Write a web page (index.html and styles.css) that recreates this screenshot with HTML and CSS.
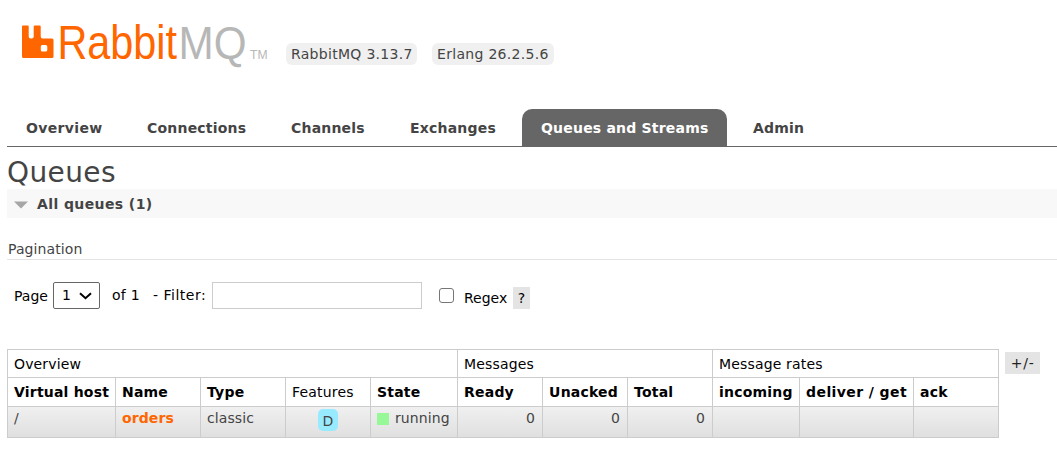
FILE: index.html
```html
<!DOCTYPE html>
<html lang="en">
<head>
<meta charset="utf-8">
<title>RabbitMQ Management</title>
<link rel="stylesheet" href="styles.css">
</head>
<body>
<header class="header">
  <svg class="logo" width="250" height="64" viewBox="0 -10 250 64" role="img" aria-label="RabbitMQ">
    <path class="brand" fill-rule="evenodd" d="M2 6.500q0-1 1-1h4.700q1 0 1 1V16.500q0 2 2 2h1q2 0 2-2V6.500q0-1 1-1h5q1 0 1 1V16.500q0 2 2 2h9.300q1.500 0 1.500 1.500V36.500q0 1.500-1.500 1.500h-28.500q-1.500 0-1.500-1.500zM22.300 25q-1.500 0-1.500 1.500v3.500q0 1.500 1.500 1.500h3.500q1.500 0 1.500-1.500v-3.500q0-1.500-1.500-1.500z"/>
    <text class="word brand" x="37.500" y="39" textLength="119.500" lengthAdjust="spacingAndGlyphs">Rabbit</text>
    <text class="word grey" x="158.500" y="38.500" textLength="68" lengthAdjust="spacingAndGlyphs">MQ</text>
    <text class="tm grey" x="230" y="39" textLength="17.500" lengthAdjust="spacingAndGlyphs">TM</text>
  </svg>
  <span class="version v-rabbit">RabbitMQ 3.13.7</span>
  <span class="version v-erlang">Erlang 26.2.5.6</span>
</header>
<nav class="tabs">
  <a class="tab t-overview">Overview</a>
  <a class="tab t-connections">Connections</a>
  <a class="tab t-channels">Channels</a>
  <a class="tab t-exchanges">Exchanges</a>
  <a class="tab t-queues selected">Queues and Streams</a>
  <a class="tab t-admin">Admin</a>
</nav>
<main>
  <h1>Queues</h1>
  <h2><svg class="arrow" width="14" height="8" viewBox="0 0 14 8"><path d="M0 .5h14L7 7.500z"/></svg><span class="title">All queues (1)</span></h2>
  <h3>Pagination</h3>
  <form class="filter">
    <label class="page-label">Page</label>
    <span class="select">1<svg width="13" height="8" viewBox="0 0 13 8"><path d="M1 1.200l5.500 5 5.500-5"/></svg></span>
    <span class="of">of 1</span>
    <span class="filter-label">- Filter:</span>
    <input class="text" type="text">
    <span class="check"></span>
    <span class="regex">Regex</span>
    <span class="help">?</span>
  </form>
  <div class="list">
    <table>
      <colgroup><col class="c108"><col class="c85"><col class="c85"><col class="c85"><col class="c87"><col class="c85"><col class="c85"><col class="c85"><col class="c87"><col class="c114"><col class="c85"></colgroup>
      <tr class="groups"><td colspan="5">Overview</td><td colspan="3">Messages</td><td colspan="3">Message rates</td></tr>
      <tr class="heads"><th>Virtual host</th><th>Name</th><th>Type</th><th class="plain">Features</th><th>State</th><th>Ready</th><th>Unacked</th><th>Total</th><th>incoming</th><th class="wide">deliver / get</th><th>ack</th></tr>
      <tr class="data"><td>/</td><td><a class="queue">orders</a></td><td>classic</td><td class="center"><span class="feature">D</span></td><td><span class="running"><i></i>running</span></td><td class="num">0</td><td class="num">0</td><td class="num">0</td><td></td><td></td><td></td></tr>
    </table>
    <span class="toggle">+/-</span>
  </div>
</main>
</body>
</html>
```
FILE: styles.css
```css
* { box-sizing: border-box; }
body { margin: 0; padding-left: 7px; background: #fff; color: #444; font: 14px/17px Verdana, "DejaVu Sans", sans-serif; overflow: hidden; }
.header { display: flex; align-items: flex-start; height: 109px; padding: 10px 0 0 13px; }
.logo { display: block; }
.brand { fill: #f60; }
.grey { fill: #b7b7b7; }
.word { font: 48px "Liberation Sans", sans-serif; }
.word.grey { font-size: 47px; }
.tm { font: 12.5px "Liberation Sans", sans-serif; }
.version { height: 22px; margin-top: 33px; padding: 0 5px; line-height: 22px; letter-spacing: .3px; background: #f0f0f0; border-radius: 6px; white-space: nowrap; }
.v-rabbit { width: 131px; margin-left: 16px; }
.v-erlang { width: 122px; margin-left: 15px; }
.tabs { display: flex; gap: 7px; height: 38px; border-bottom: 1px solid #666; letter-spacing: .2px; }
.tab { height: 37px; padding-left: 19px; line-height: 38px; font-weight: bold; white-space: nowrap; border-radius: 10px 10px 0 0; }
.t-overview { width: 114px; letter-spacing: .35px; }
.t-connections { width: 137px; }
.t-channels { width: 112px; }
.t-exchanges { width: 124px; }
.t-queues { width: 205px; }
.selected { background: #666; color: #fff; }
h1 { height: 42px; margin: 0; font-size: 28px; line-height: 52px; font-weight: normal; letter-spacing: .4px; }
h2 { display: flex; align-items: center; height: 29px; margin: 0; padding-left: 7px; gap: 9px; font-size: 14px; line-height: 29px; letter-spacing: .4px; background: #f8f8f8; }
.title { padding-top: 2px; }
.arrow { margin-top: 3px; fill: #a6a6a6; }
h3 { height: 42px; margin: 0; padding: 22px 0 0 1px; font-size: 14px; line-height: 18px; font-weight: normal; letter-spacing: .1px; border-bottom: 1px solid #e4e4e4; }
.filter { display: flex; align-items: flex-start; height: 89px; padding: 22px 0 0 6px; color: #000; white-space: nowrap; }
.page-label { width: 40px; padding: 6px 0 0 1px; }
.select { display: flex; justify-content: space-between; align-items: center; width: 47px; height: 27px; padding: 0 7px 0 8px; border: 1px solid #666; border-radius: 2px; }
.select path { fill: none; stroke: #000; stroke-width: 2; }
.of { width: 40px; margin-left: 12px; padding-top: 5px; letter-spacing: .3px; }
.filter-label { width: 60px; padding: 5px 0 0 1px; letter-spacing: .5px; }
.text { width: 210px; height: 27px; border: 1px solid #ccc; }
.check { width: 15px; height: 15px; margin: 6px 0 0 17px; border: 1px solid #767676; border-radius: 3px; }
.regex { width: 50px; margin-left: 9px; padding: 8px 0 0 1px; }
.help { width: 17px; height: 22px; margin-top: 5px; background: #e4e4e4; text-align: center; line-height: 23px; }
.list { display: flex; align-items: flex-start; }
table { width: 992px; table-layout: fixed; border-collapse: collapse; color: #000; }
td, th { padding: 0 0 0 6px; border: 1px solid #ccc; text-align: left; vertical-align: top; white-space: nowrap; }
.c108 { width: 108px; }
.c85 { width: 85px; }
.c87 { width: 87px; }
.c114 { width: 114px; }
.groups td { height: 28px; padding-top: 2px; line-height: 25px; letter-spacing: .15px; }
.heads th { height: 29px; padding-top: 1px; line-height: 27px; letter-spacing: .2px; }
.heads .plain { font-weight: normal; }
.heads .wide { letter-spacing: .4px; }
.data { background: linear-gradient(#f0f0f0, #dfdfdf); color: #444; }
.data td { height: 31px; padding-top: 3px; line-height: 17px; letter-spacing: .1px; }
.queue { color: #f60; font-weight: bold; }
.data .center { padding: 2px 0 0; text-align: center; }
.feature { display: inline-block; width: 20px; height: 22px; line-height: 24px; background: #98ebff; border-radius: 5px; }
.running { display: flex; align-items: center; gap: 6px; }
.running i { width: 12px; height: 12px; margin-top: 1px; background: #98f898; }
.data .num { padding-right: 7px; text-align: right; }
.toggle { width: 35px; height: 22px; margin: 3px 0 0 6px; line-height: 22px; letter-spacing: .7px; text-align: center; background: #e4e4e4; color: #222; }
```
